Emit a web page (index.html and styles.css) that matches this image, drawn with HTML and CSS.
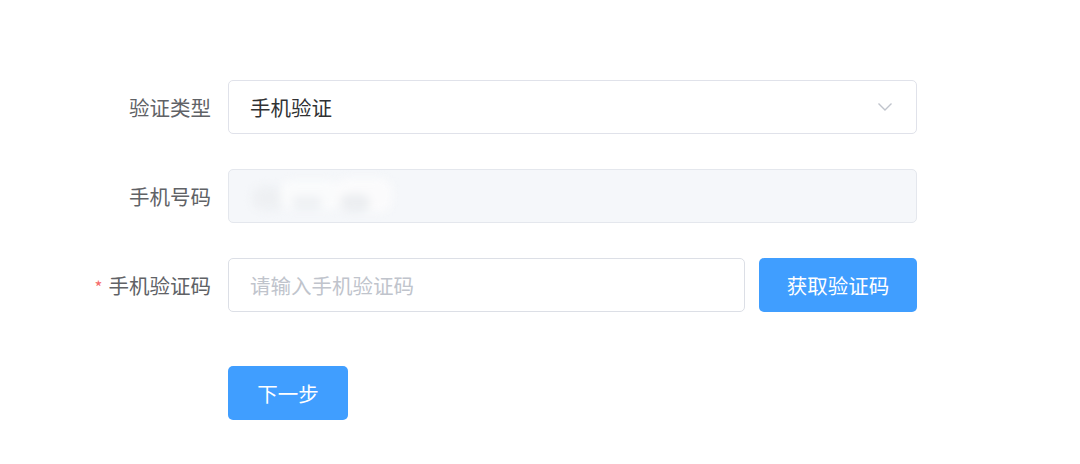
FILE: index.html
```html
<!DOCTYPE html>
<html lang="zh">
<head>
<meta charset="utf-8">
<link rel="stylesheet" href="styles.css">
</head>
<body>
<form class="form">
  <div class="row">
    <label class="label">验证类型</label>
    <div class="control">
      <div class="select">
        <span class="select-text">手机验证</span>
        <svg class="arrow" width="16" height="10" viewBox="0 0 16 10"><path d="M1.5 1.5 L8 8 L14.5 1.5" fill="none" stroke="#c0c4cc" stroke-width="1.4"/></svg>
      </div>
    </div>
  </div>
  <div class="row">
    <label class="label">手机号码</label>
    <div class="control">
      <div class="input disabled">
        <span class="blur">
          <span class="b b1"></span><span class="b b2"></span><span class="b b3"></span><span class="b b4"></span><span class="b b5"></span>
        </span>
      </div>
    </div>
  </div>
  <div class="row">
    <label class="label"><span class="star">*</span>手机验证码</label>
    <div class="control split">
      <div class="input code"><span class="placeholder">请输入手机验证码</span></div>
      <button type="button" class="btn btn-code">获取验证码</button>
    </div>
  </div>
  <div class="row row-actions">
    <span class="label"></span>
    <div class="control">
      <button type="button" class="btn btn-next">下一步</button>
    </div>
  </div>
</form>
</body>
</html>
```
FILE: styles.css
```css
* { box-sizing: border-box; }
html, body { margin: 0; padding: 0; background: #fff; }
body {
  font-family: "Noto Sans CJK SC", "Noto Sans", sans-serif;
  font-size: 20px;
  width: 1080px;
  height: 464px;
  overflow: hidden;
}
.form { padding-top: 80px; }
.row {
  display: flex;
  align-items: center;
  height: 54px;
  margin-bottom: 35px;
}
.row-actions { margin-top: 54px; }
.row:nth-child(3) { margin-bottom: 0; }
.label {
  width: 228px;
  padding-right: 17px;
  text-align: right;
  color: #606266;
  font-size: 20.5px;
}
.star { color: #f56c6c; margin-right: 6px; font-size: 17px; }
.control { width: 689px; height: 54px; display: flex; }
.split { gap: 14px; }
.select, .input {
  flex: 1;
  height: 54px;
  border: 1px solid #dcdfe6;
  border-radius: 5px;
  display: flex;
  align-items: center;
  padding: 0 21px;
  background: #fff;
}
.select { justify-content: space-between; border-color: #e0e2ea; }
.select-text { color: #303133; font-size: 20.5px; }
.arrow { margin-right: 2px; }
.disabled { background: #f5f7fa; border-color: #e4e7ed; }
.code { flex: 0 0 517px; }
.placeholder { color: #c0c4cc; font-size: 20.5px; }
.blur { position: relative; width: 145px; height: 40px; margin-left: 2px; filter: blur(4px); }
.b { position: absolute; border-radius: 12px; }
.b1 { left: 0; top: 10px; width: 34px; height: 24px; background: #eef0f3; }
.b2 { left: 28px; top: 4px; width: 60px; height: 30px; background: #fafbfc; }
.b3 { left: 84px; top: 2px; width: 56px; height: 34px; background: #fbfbfc; }
.b4 { left: 88px; top: 18px; width: 30px; height: 18px; background: #eceef1; }
.b5 { left: 40px; top: 20px; width: 30px; height: 14px; background: #eff1f4; }
.btn {
  border: none;
  background: #409eff;
  color: #fff;
  font-family: inherit;
  font-size: 20.5px;
  border-radius: 5px;
  height: 54px;
  padding: 0;
}
.btn-code { width: 158px; }
.btn-next { width: 120px; }
```
